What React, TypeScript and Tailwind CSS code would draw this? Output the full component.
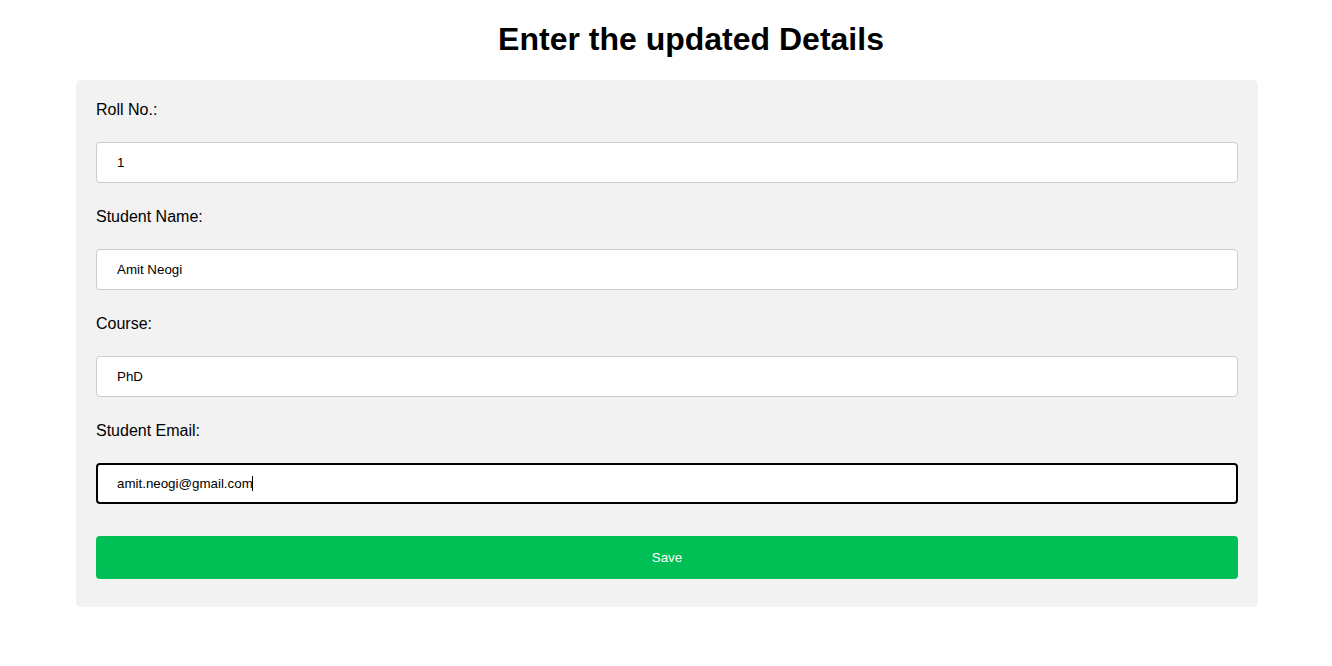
const fields = [
  { label: "Roll No.:", value: "1" },
  { label: "Student Name:", value: "Amit Neogi" },
  { label: "Course:", value: "PhD" },
  { label: "Student Email:", value: "amit.neogi@gmail.com", focused: true },
];

export default function App() {
  return (
    <div className="min-h-[666px] bg-white font-['Liberation_Sans',Arial,sans-serif] text-black">
      <h1 className="pl-[50px] pt-[21px] text-center text-[32px] font-bold leading-[37px]">
        Enter the updated Details
      </h1>
      <form
        className="ml-[76px] mt-[22px] w-[1182px] rounded-[5px] bg-[#f2f2f2] px-5 pt-5 pb-[28px]"
        onSubmit={(e) => e.preventDefault()}
      >
        {fields.map((field) => (
          <div key={field.label}>
            <label className="block h-[18px] pt-px text-base leading-[18px]">{field.label}</label>
            <div className="relative my-6">
              <input
                type="text"
                defaultValue={field.value}
                className={
                  field.focused
                    ? "box-border block h-[41px] w-full rounded-[4px] border-2 border-black bg-white px-[19px] text-[13.33px] caret-transparent outline-none"
                    : "box-border block h-[41px] w-full rounded-[4px] border border-[#cccccc] bg-white px-5 text-[13.33px] outline-none"
                }
              />
              {field.focused && (
                <span className="absolute top-[13px] left-[156px] h-[15px] w-px bg-black" />
              )}
            </div>
          </div>
        ))}
        <button
          type="submit"
          className="mt-8 block h-[43px] w-full rounded-[4px] bg-[#00bf55] text-[13.33px] text-white"
        >
          Save
        </button>
      </form>
    </div>
  );
}
